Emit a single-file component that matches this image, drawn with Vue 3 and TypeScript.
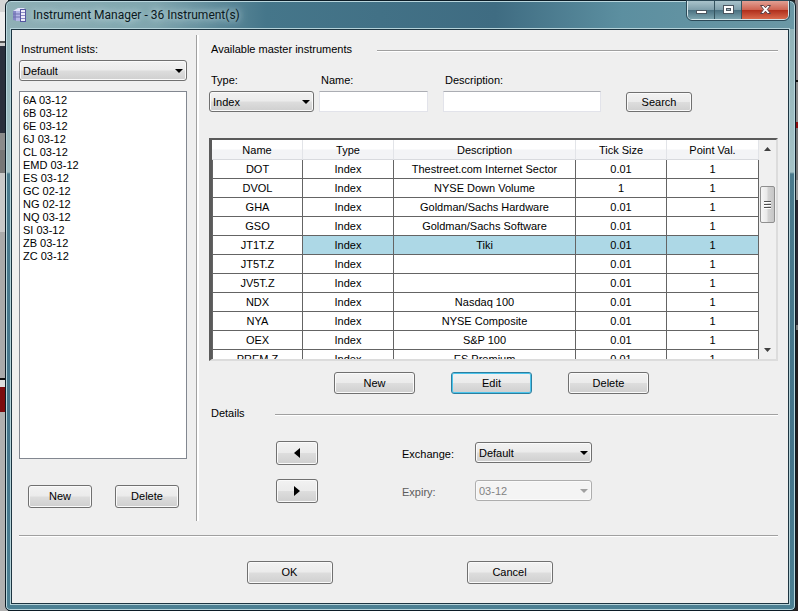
<script setup lang="ts">
import { ref } from 'vue'

interface Instrument {
  name: string
  type: string
  description: string
  tick: string
  point: string
}

const contracts: string[] = [
  '6A 03-12', '6B 03-12', '6E 03-12', '6J 03-12', 'CL 03-12', 'EMD 03-12', 'ES 03-12',
  'GC 02-12', 'NG 02-12', 'NQ 03-12', 'SI 03-12', 'ZB 03-12', 'ZC 03-12',
]

const index = (name: string, description: string, tick = '0.01'): Instrument => ({
  name, type: 'Index', description, tick, point: '1',
})

const instruments: Instrument[] = [
  index('DOT', 'Thestreet.com Internet Sector'),
  index('DVOL', 'NYSE Down Volume', '1'),
  index('GHA', 'Goldman/Sachs Hardware'),
  index('GSO', 'Goldman/Sachs Software'),
  index('JT1T.Z', 'Tiki'),
  index('JT5T.Z', ''),
  index('JV5T.Z', ''),
  index('NDX', 'Nasdaq 100'),
  index('NYA', 'NYSE Composite'),
  index('OEX', 'S&P 100'),
  index('PREM.Z', 'ES Premium'),
]

const selected = ref('JT1T.Z')
const nameFilter = ref('')
const descriptionFilter = ref('')
</script>

<template>
  <div class="desktop">
    <div class="window">
      <header class="titlebar">
        <svg class="app-icon" viewBox="0 0 14 14" aria-hidden="true">
          <path d="M0 3 L5 1 V13 L0 12Z" fill="#8486c4" />
          <path d="M0 3 L5 0 L12 0 L8 3Z" fill="#e4e4fa" />
          <rect x="3" y="3" width="5" height="10" fill="#b4b6e6" />
          <path d="M0 6h8M0 9h8" stroke="#6e70b0" stroke-width="1" />
          <rect x="7.500" y="1.500" width="5" height="12" fill="#eeeefa" stroke="#5557a0" stroke-width="1" />
          <path d="M8 4.500h4M8 7.500h4M8 10.500h4" stroke="#8a8cc6" stroke-width="1" />
        </svg>
        <h1>Instrument Manager - 36 Instrument(s)</h1>
        <div class="caption-buttons">
          <button type="button" class="minimize" aria-label="Minimize">
            <svg width="13" height="12" viewBox="0 0 13 12"><rect x="1.5" y="6.5" width="10" height="3" fill="#fff" stroke="#4b5660" /></svg>
          </button>
          <button type="button" class="maximize" aria-label="Maximize">
            <svg width="13" height="12" viewBox="0 0 13 12">
              <rect x="1.5" y="1.5" width="10" height="8" fill="#fff" stroke="#4b5660" />
              <rect x="4.5" y="4.5" width="4" height="2" fill="#9bb0bb" stroke="#4b5660" />
            </svg>
          </button>
          <button type="button" class="close" aria-label="Close">
            <svg width="13" height="12" viewBox="0 0 13 12">
              <path d="M1.5 1.5H4.5L6.5 3.8L8.5 1.5H11.5L8.4 5.5L11.5 9.5H8.5L6.5 7.2L4.5 9.5H1.5L4.6 5.5Z" fill="#fff" stroke="#5b4045" />
            </svg>
          </button>
        </div>
      </header>

      <div class="client">
        <main class="main">
          <section class="lists">
            <label for="list">Instrument lists:</label>
            <div class="combo">
              <select id="list"><option>Default</option></select>
              <svg viewBox="0 0 8 4"><path d="M0 0h8L4 4z" /></svg>
            </div>
            <select class="listbox" multiple size="13" aria-label="Instruments in list">
              <option v-for="c in contracts" :key="c">{{ c }}</option>
            </select>
            <div class="list-actions">
              <button type="button" class="btn">New</button>
              <button type="button" class="btn">Delete</button>
            </div>
          </section>

          <section class="master">
            <div class="group-title master-title"><h2>Available master instruments</h2><hr></div>

            <form class="search" @submit.prevent>
              <div class="field type">
                <label for="type">Type:</label>
                <div class="combo">
                  <select id="type"><option>Index</option></select>
                  <svg viewBox="0 0 8 4"><path d="M0 0h8L4 4z" /></svg>
                </div>
              </div>
              <div class="field name">
                <label for="name">Name:</label>
                <input id="name" v-model="nameFilter" type="text">
              </div>
              <div class="field description">
                <label for="description">Description:</label>
                <input id="description" v-model="descriptionFilter" type="text">
              </div>
              <button type="submit" class="btn search-btn">Search</button>
            </form>

            <div class="grid">
              <div class="grid-view">
                <table>
                  <colgroup>
                    <col class="col-name"><col class="col-std"><col><col class="col-std"><col class="col-point">
                  </colgroup>
                  <thead>
                    <tr><th>Name</th><th>Type</th><th>Description</th><th>Tick Size</th><th>Point Val.</th></tr>
                  </thead>
                  <tbody>
                    <tr v-for="i in instruments" :key="i.name" :class="{ selected: i.name === selected }" @click="selected = i.name">
                      <td>{{ i.name }}</td>
                      <td>{{ i.type }}</td>
                      <td>{{ i.description }}</td>
                      <td>{{ i.tick }}</td>
                      <td>{{ i.point }}</td>
                    </tr>
                  </tbody>
                </table>
              </div>
              <div class="scrollbar">
                <button type="button" aria-label="Scroll up"><svg width="7" height="4" viewBox="0 0 7 4"><path d="M0 4h7L3.5 0z" /></svg></button>
                <div class="track"><div class="thumb"><i /><i /><i /></div></div>
                <button type="button" aria-label="Scroll down"><svg width="7" height="4" viewBox="0 0 7 4"><path d="M0 0h7L3.5 4z" /></svg></button>
              </div>
            </div>

            <div class="grid-actions">
              <button type="button" class="btn">New</button>
              <button type="button" class="btn focused">Edit</button>
              <button type="button" class="btn">Delete</button>
            </div>

            <div class="group-title details-title"><h2>Details</h2><hr></div>

            <div class="details">
              <button type="button" class="btn" aria-label="Add to list"><svg width="6" height="10" viewBox="0 0 6 10"><path d="M6 0v10L0 5z" /></svg></button>
              <label for="exchange">Exchange:</label>
              <div class="combo">
                <select id="exchange"><option>Default</option></select>
                <svg viewBox="0 0 8 4"><path d="M0 0h8L4 4z" /></svg>
              </div>
              <button type="button" class="btn" aria-label="Remove from list"><svg width="6" height="10" viewBox="0 0 6 10"><path d="M0 0v10L6 5z" /></svg></button>
              <label for="expiry" class="disabled">Expiry:</label>
              <div class="combo disabled">
                <select id="expiry" disabled><option>03-12</option></select>
                <svg viewBox="0 0 8 4"><path d="M0 0h8L4 4z" /></svg>
              </div>
            </div>
          </section>
        </main>

        <footer class="footer">
          <button type="button" class="btn">OK</button>
          <button type="button" class="btn">Cancel</button>
        </footer>
      </div>
    </div>
  </div>
</template>

<style>
body {
  margin: 0;
}
</style>

<style scoped>
* {
  box-sizing: border-box;
}

.desktop {
  min-height: 100vh;
  display: flex;
  padding: 0 2px 0 5px;
  font: 11px/14px "Liberation Sans", Arial, sans-serif;
  color: #000;
  background:
    linear-gradient(#8c8589 0 80px, #111 80px 82px, #8a8a8a 82px 122px, #8c1010 122px 128px, #777 128px 180px, #999 180px 200px, #2b2933 200px 325px, #777 325px 330px, #241f20 330px) right / 3px 100% no-repeat,
    linear-gradient(#d6d6d6 0 12px, #eee 12px 41px, #555 41px 43px, #ccc 43px 46px, #2a2f3c 46px 133px, #8b8b8b 133px 150px, #777 150px 173px, #c9c9c9 173px 232px, #aaa 232px 378px, #111 378px 380px, #ddd 380px 387px, #7c0d10 387px 412px, #b0b0b0 412px) left / 8px 100% no-repeat,
    #222;
}

button,
select,
input {
  font: inherit;
  color: inherit;
  margin: 0;
}

h1,
h2 {
  margin: 0;
  font: inherit;
  white-space: nowrap;
}

.window {
  flex: 1;
  min-width: 0;
  display: flex;
  flex-direction: column;
  padding: 0 6px 6px 5px;
  border: 1px solid #0c1c26;
  border-radius: 6px 6px 5px 5px;
  box-shadow: inset 0 0 0 1px #b9d6dd;
  background:
    linear-gradient(90deg, #8fb0b6 0, #7fa5ae 150px, #45768a 260px, #3f6c82 62%, #5c8fa0 78%, #6b98a5 100%) top / 100% 28px no-repeat,
    linear-gradient(#8db0b6 0, #a5c2c6 171px, #4a7a8c 173px, #44748a 75%, #4c8093 100%);
}

.titlebar {
  height: 28px;
  flex: none;
  display: flex;
  align-items: flex-start;
  padding-left: 2px;
}

.app-icon {
  flex: none;
  width: 14px;
  height: 14px;
  margin-top: 7px;
}

h1 {
  margin: 5px auto 0 6px;
  font: 12px/18px Roboto, "Open Sans", sans-serif;
  color: #0b1820;
  text-shadow: 0 0 6px #c4dce0, 0 0 10px #b4d0d6;
}

.caption-buttons {
  display: flex;
  height: 19px;
  border: 1px solid #d5e6ea;
  border-top: 0;
  border-radius: 0 0 5px 5px;
  overflow: hidden;
  outline: 1px solid #2c4a58;
}

.caption-buttons button {
  display: flex;
  align-items: center;
  justify-content: center;
  width: 27px;
  padding: 0;
  border: 0;
  border-right: 1px solid #35545f;
  background: linear-gradient(#a9c3cb 0, #7f9fab 48%, #4b7181 52%, #7ba3ae 100%);
}

.caption-buttons .close {
  width: 46px;
  border-right: 0;
  background: linear-gradient(#e2a094 0, #cf6553 48%, #b02f1c 52%, #d96a4c 100%);
}

.client {
  flex: 1;
  display: flex;
  flex-direction: column;
  padding: 0 10px 0 7px;
  border: 1px solid #1d3541;
  box-shadow: 0 0 0 1px #b4d2d9;
  background: #efefef;
}

.main {
  flex: 1;
  display: flex;
}

.lists {
  flex: none;
  display: flex;
  flex-direction: column;
  width: 168px;
  padding: 12px 0 27px;
}

.lists label,
.field label {
  padding-left: 2px;
  margin-bottom: 4px;
}

.combo {
  display: grid;
  align-items: center;
  height: 21px;
}

.combo select,
.combo svg {
  grid-area: 1 / 1;
}

.combo select {
  appearance: none;
  width: 100%;
  height: 21px;
  padding: 0 18px 0 3px;
  border: 1px solid #707070;
  border-radius: 3px;
  background: linear-gradient(#f2f2f2 0, #ebebeb 48%, #dddddd 52%, #cfcfcf 100%);
  box-shadow: inset 0 0 0 1px #fafafa;
}

.combo svg {
  justify-self: end;
  width: 8px;
  height: 4px;
  margin-right: 4px;
  pointer-events: none;
}

.combo.disabled select {
  color: #838383;
  opacity: 1;
  border-color: #adadad;
  background: #f4f4f4;
}

.combo.disabled svg {
  fill: #a0a0a0;
}

.listbox {
  flex: 1;
  margin: 10px 0 26px;
  padding: 2px 0;
  border: 1px solid #828790;
  border-radius: 0;
  background: #fff;
  outline: 0;
  overflow: hidden;
}

.listbox option {
  min-height: 13px;
  padding: 0 3px;
  line-height: 13px;
}

.list-actions {
  display: flex;
  justify-content: space-between;
  padding: 0 8px 0 9px;
}

.btn {
  display: flex;
  align-items: center;
  justify-content: center;
  height: 23px;
  padding: 0 0 1px;
  border: 1px solid #707070;
  border-radius: 3px;
  background: linear-gradient(#f2f2f2 0, #ebebeb 48%, #dddddd 52%, #cfcfcf 100%);
  box-shadow: inset 0 0 0 1px #fafafa;
}

.list-actions .btn {
  width: 64px;
}

.btn.focused {
  border-color: #2c7f9f;
  box-shadow: inset 0 0 0 1px #4cc4ec;
}

.master {
  flex: 1;
  min-width: 0;
  margin-left: 9px;
  padding: 12px 0 0 13px;
  position: relative;
  display: flex;
  flex-direction: column;
}

.master::before {
  content: "";
  position: absolute;
  top: 5px;
  bottom: 14px;
  left: 0;
  width: 2px;
  border-left: 1px solid #a0a0a0;
  background: #fff;
}

.group-title {
  display: flex;
  align-items: center;
  padding-left: 2px;
}

hr {
  flex: 1;
  height: 2px;
  margin: 3px 0 0;
  border: 0;
  border-top: 1px solid #a0a0a0;
  background: #fff;
}

.master-title h2 {
  width: 166px;
}

.details-title h2 {
  width: 64px;
}

.search {
  display: flex;
  align-items: flex-end;
  margin: 17px 0 26px;
}

.field {
  display: flex;
  flex-direction: column;
}

.field input {
  width: 100%;
  height: 21px;
  padding: 0 3px;
  border: 1px solid #e2e3ea;
  border-top-color: #abadb3;
  background: #fff;
}

.type {
  width: 105px;
}

.name {
  width: 109px;
  margin-left: 5px;
}

.description {
  width: 158px;
  margin: 0 25px 0 15px;
}

.search-btn {
  width: 66px;
  height: 20px;
}

.grid {
  display: flex;
  height: 223px;
  border: 2px solid #5a5a5a;
  border-left-width: 3px;
  border-right-color: #dcdcdc;
  border-bottom-color: #dcdcdc;
  background: #fff;
}

.grid-view {
  flex: 1;
  min-width: 0;
  overflow: hidden;
}

table {
  width: 100%;
  table-layout: fixed;
  border-collapse: separate;
  border-spacing: 0;
}

.col-name,
.col-std {
  width: 91px;
}

.col-point {
  width: 92px;
}

th,
td {
  height: 19px;
  padding: 0;
  text-align: center;
  font-weight: normal;
  line-height: 14px;
  white-space: nowrap;
}

th {
  height: 20px;
  border-right: 1px solid #e2e4e8;
  border-bottom: 1px solid #d8dade;
  background: linear-gradient(#fff 0, #fff 45%, #f3f4f6 55%, #f3f4f6 100%);
}

td {
  border-right: 1px solid #646464;
  border-bottom: 1px solid #646464;
}

td:first-child {
  border-left: 1px solid #646464;
}

.selected td:not(:first-child) {
  background: #add8e6;
}

.scrollbar {
  flex: none;
  width: 17px;
  display: flex;
  flex-direction: column;
  background: #f0f0f0;
}

.scrollbar button {
  display: flex;
  align-items: center;
  justify-content: center;
  height: 18px;
  padding: 0;
  border: 0;
  background: none;
}

.scrollbar path {
  fill: #404040;
}

.track {
  flex: 1;
  padding: 28px 1px 0;
}

.thumb {
  height: 37px;
  display: flex;
  flex-direction: column;
  align-items: center;
  justify-content: center;
  gap: 1px;
  border: 1px solid #8f8f8f;
  border-radius: 2px;
  background: linear-gradient(90deg, #f6f6f6 0, #e8e8e8 48%, #d4d4d4 52%, #c6c6c6 100%);
}

.thumb i {
  width: 7px;
  height: 2px;
  border-top: 1px solid #505050;
  background: #fff;
}

.grid-actions {
  display: flex;
  gap: 36px;
  margin: 11px 0 12px;
  padding-left: 125px;
}

.grid-actions .btn {
  width: 81px;
  height: 22px;
}

.details {
  display: grid;
  grid-template-columns: 126px 73px 117px;
  align-items: center;
  row-gap: 14px;
  padding: 21px 0 0 67px;
}

.details label {
  padding-top: 1px;
}

.details .combo {
  margin-bottom: 1px;
}

.details .btn {
  width: 42px;
  height: 24px;
}

.disabled {
  color: #5c5c5c;
}

.footer {
  display: flex;
  justify-content: center;
  gap: 134px;
  padding: 25px 0 19px 2px;
  border-top: 1px solid #a0a0a0;
  box-shadow: inset 0 1px #fff;
}

.footer .btn {
  width: 86px;
}
</style>
